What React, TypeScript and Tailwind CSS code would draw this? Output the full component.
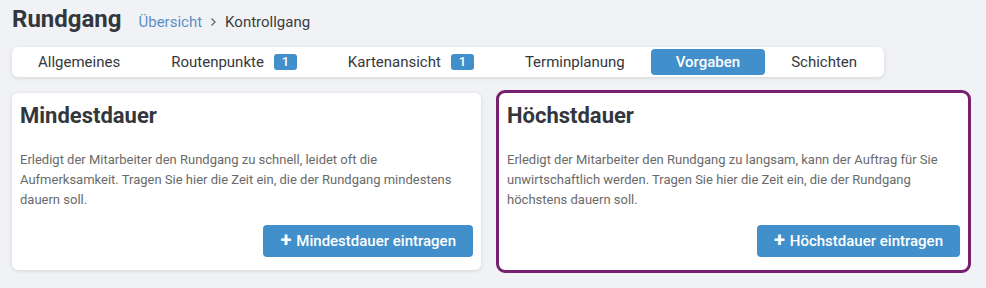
import React from "react";

const tabs = [
  { label: "Allgemeines" },
  { label: "Routenpunkte", badge: "1" },
  { label: "Kartenansicht", badge: "1" },
  { label: "Terminplanung" },
  { label: "Vorgaben", active: true },
  { label: "Schichten" },
];

function Card({
  title,
  text,
  button,
  highlight,
}: {
  title: string;
  text: string;
  button: string;
  highlight?: boolean;
}) {
  return (
    <div
      className={
        "flex flex-col bg-white rounded-[6px] px-[8px] pt-[9px] pb-[13px] " +
        (highlight
          ? "outline-[3px] outline-solid outline-[#76216f] rounded-[5px]"
          : "shadow-[0_1px_4px_rgba(0,0,0,0.12)]")
      }
    >
      <h2 className="text-[22px] leading-[28px] font-bold text-[#33373d]">{title}</h2>
      <p className="mt-[20px] text-[13px] leading-[20px] text-[#6a6a6a]">{text}</p>
      <div className="flex justify-end mt-[15px]">
        <button className="h-[32px] px-[17px] rounded-[4px] bg-[#418fcb] text-white text-[15px] font-medium flex items-center gap-[5px]">
          <span className="text-[20px] font-bold leading-none -mt-[2px]">+</span>
          <span>{button}</span>
        </button>
      </div>
    </div>
  );
}

export default function App() {
  return (
    <div
      className="w-[986px] h-[288px] bg-[#f1f2f5] pl-[12px] pr-[18px] pt-[4px]"
      style={{ fontFamily: "Roboto, 'Liberation Sans', sans-serif" }}
    >
      <div className="flex items-baseline">
        <h1 className="text-[24px] leading-[30px] font-bold text-[#33373d]">Rundgang</h1>
        <nav className="ml-[17px] flex items-baseline text-[15px] text-[#3a3d42]">
          <span className="text-[#5b8fc6]">Übersicht</span>
          <span className="mx-[8px] text-[#666]">
            <svg width="7" height="10" viewBox="0 0 7 10" className="inline-block -mt-[2px]">
              <path d="M1.5 1.5 L5 5 L1.5 8.5" fill="none" stroke="#666" strokeWidth="1.3" />
            </svg>
          </span>
          <span>Kontrollgang</span>
        </nav>
      </div>

      <div className="mt-[13px] inline-flex items-center gap-px bg-white rounded-[6px] p-[2px] pl-px shadow-[0_1px_4px_rgba(0,0,0,0.12)]">
        {tabs.map((t) => (
          <div
            key={t.label}
            className={
              "h-[26px] px-[25px] flex items-center rounded-[4px] text-[15px] " +
              (t.active ? "bg-[#418fcb] text-white font-medium" : "text-[#35383d]")
            }
          >
            <span>{t.label}</span>
            {t.badge && (
              <span className="ml-[10px] w-[23px] h-[16px] rounded-[3px] bg-[#418fcb] text-white text-[13px] leading-[16px] font-medium flex items-center justify-center">
                {t.badge}
              </span>
            )}
          </div>
        ))}
      </div>

      <div className="mt-[16px] grid grid-cols-2 gap-[18px]">
        <Card
          title="Mindestdauer"
          text="Erledigt der Mitarbeiter den Rundgang zu schnell, leidet oft die Aufmerksamkeit. Tragen Sie hier die Zeit ein, die der Rundgang mindestens dauern soll."
          button="Mindestdauer eintragen"
        />
        <Card
          title="Höchstdauer"
          text="Erledigt der Mitarbeiter den Rundgang zu langsam, kann der Auftrag für Sie unwirtschaftlich werden. Tragen Sie hier die Zeit ein, die der Rundgang höchstens dauern soll."
          button="Höchstdauer eintragen"
          highlight
        />
      </div>
    </div>
  );
}
